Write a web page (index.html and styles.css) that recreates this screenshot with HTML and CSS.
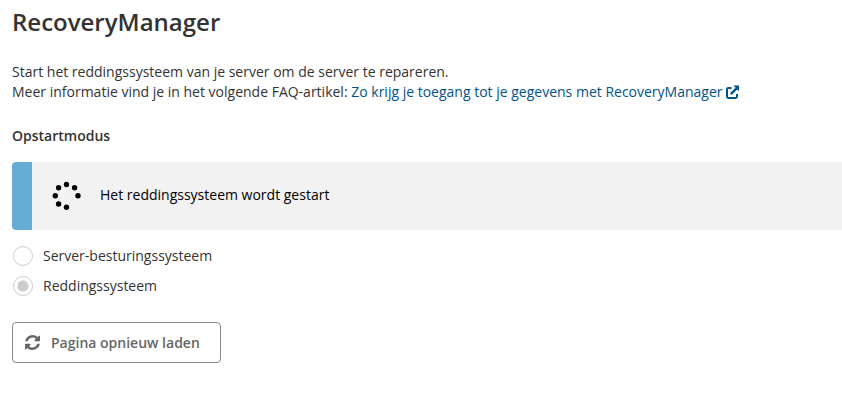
FILE: index.html
```html
<!DOCTYPE html>
<html lang="nl">
<head>
<meta charset="utf-8">
<meta name="viewport" content="width=device-width, initial-scale=1">
<title>RecoveryManager</title>
<link rel="stylesheet" href="styles.css">
</head>
<body>
<main class="page">
  <h1 class="title">RecoveryManager</h1>
  <p class="intro">Start het reddingssysteem van je server om de server te repareren.<br>
    Meer informatie vind je in het volgende FAQ-artikel: <a class="link" href="#faq">Zo krijg je toegang tot je gegevens met RecoveryManager <svg class="link-icon" viewBox="0 0 14 14" aria-hidden="true"><path d="M5.5 3H2.4Q1 3 1 4.4V11.6Q1 13 2.4 13H9.6Q11 13 11 11.6V9" fill="none" stroke="currentColor" stroke-width="2"/><path d="M4.8 9.2L11 3" stroke="currentColor" stroke-width="2.4"/><path d="M7.4 .6H13V6.200Z" fill="currentColor"/></svg></a></p>
  <form class="boot-form">
    <fieldset class="modes">
      <legend class="legend">Opstartmodus</legend>
      <div class="notice" role="status">
        <svg class="spinner" viewBox="0 0 30 30" aria-hidden="true">
          <circle cx="14.500" cy="4.500" r="2.7"/><circle cx="22.600" cy="7.700" r="2.7"/><circle cx="26" cy="15.700" r="2.7"/><circle cx="14.500" cy="27.300" r="2.7"/><circle cx="6.600" cy="24" r="2.7"/><circle cx="3.300" cy="15.700" r="2.7"/><circle cx="6.600" cy="7.700" r="2.7"/>
        </svg>
        <span>Het reddingssysteem wordt gestart</span>
      </div>
      <label class="option"><input class="radio" type="radio" name="mode" disabled>Server-besturingssysteem</label>
      <label class="option"><input class="radio" type="radio" name="mode" checked disabled>Reddingssysteem</label>
    </fieldset>
    <button class="reload" type="button">
      <svg class="reload-icon" viewBox="0 0 1536 1536" aria-hidden="true"><path fill="currentColor" d="M1511 928q0 5-1 7-64 268-268 434.500T764 1536q-146 0-282.500-55T238 1324l-129 129q-19 19-45 19t-45-19-19-45V960q0-26 19-45t45-19h448q26 0 45 19t19 45-19 45l-137 137q71 66 161 102t187 36q134 0 250-65t186-179q11-17 53-117 8-23 30-23h192q13 0 22.500 9.500t9.500 22.500zm25-800v448q0 26-19 45t-45 19h-448q-26 0-45-19t-19-45 19-45l138-138Q969 256 768 256q-134 0-250 65T332 500q-11 17-53 117-8 23-30 23H50q-13 0-22.500-9.500T18 608v-7q65-268 270-434.500T768 0q146 0 284 55.500T1297 212l130-129q19-19 45-19t45 19 19 45z"/></svg>
      Pagina opnieuw laden
    </button>
  </form>
</main>
</body>
</html>
```
FILE: styles.css
```css
* {
  box-sizing: border-box;
}

body {
  margin: 0;
  background: #fff;
  color: #333;
  font: 14px/20px "Open Sans", sans-serif;
}

.page {
  padding: 6px 0 24px 12px;
}

.title {
  margin: 0 0 24px;
  font-size: 24px;
  line-height: 32px;
  font-weight: 600;
}

.intro {
  margin: 0 0 24px;
}

.link {
  color: #00538a;
  text-decoration: none;
}

.link-icon {
  width: 14px;
  height: 14px;
  vertical-align: -2px;
}

.modes {
  margin: 0 0 21px;
  padding: 0;
  border: 0;
  min-width: 0;
}

.legend {
  margin-bottom: 16px;
  padding: 0;
  font-weight: 600;
}

.notice {
  display: flex;
  align-items: center;
  gap: 18px;
  min-height: 68px;
  margin-bottom: 11px;
  padding: 0 20px 2px;
  border-left: 20px solid #66add6;
  border-radius: 4px 0 0 4px;
  background: #f2f2f2;
  color: #000;
}

.spinner {
  width: 30px;
  height: 30px;
}

.option {
  display: flex;
  align-items: center;
  gap: 10px;
  min-height: 30px;
  padding-left: 1px;
}

.radio {
  appearance: none;
  width: 20px;
  height: 20px;
  margin: 0;
  border: 1px solid #ccc;
  border-radius: 50%;
  background: #fff;
}

.radio:checked {
  background: radial-gradient(circle, #ccc 5px, #fff 6px);
}

.reload {
  display: inline-flex;
  align-items: center;
  gap: 11px;
  min-height: 41px;
  padding: 0 20px 0 12px;
  border: 1px solid #888;
  border-radius: 4px;
  background: #fff;
  color: #666;
  font: inherit;
  font-weight: 600;
}

.reload-icon {
  width: 15px;
  height: 15px;
}
```
